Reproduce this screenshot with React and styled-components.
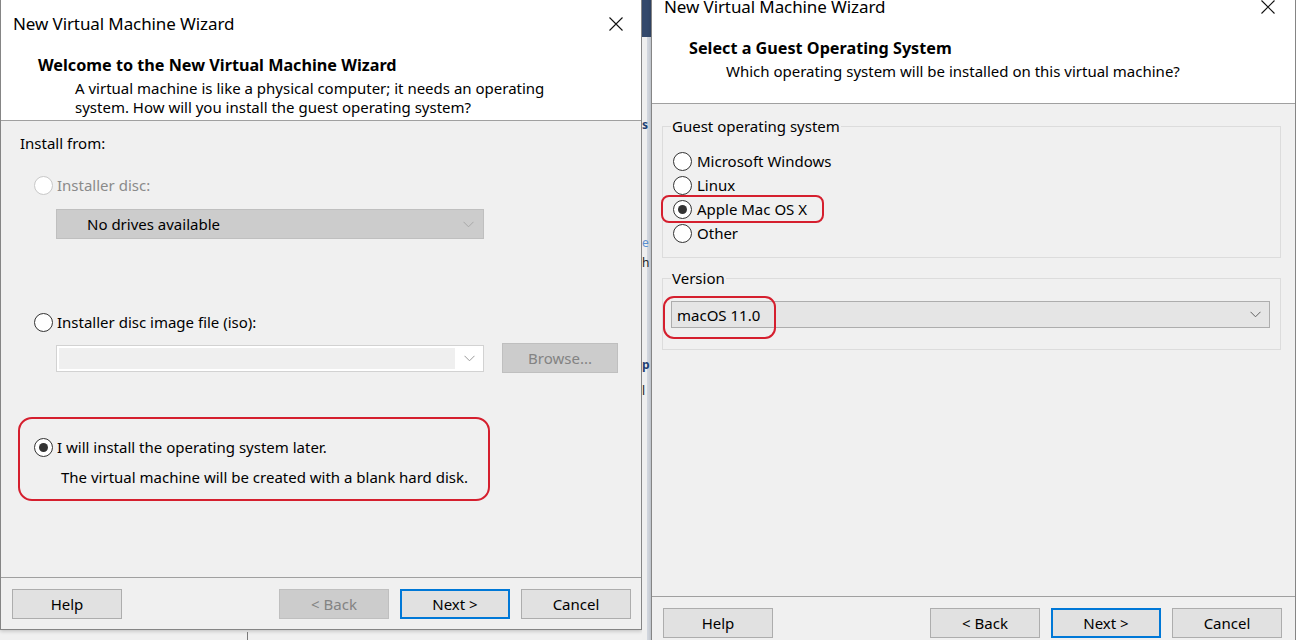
import React from 'react';
import styled, { createGlobalStyle } from 'styled-components';

const GlobalStyle = createGlobalStyle`
  html, body {
    margin: 0;
    padding: 0;
    background: #f0f0f0;
  }
`;

const Page = styled.div`
  width: 1296px;
  height: 640px;
  overflow: hidden;
  display: flex;
  align-items: flex-start;
  background: #f0f0f0;
  font-family: "Noto Sans", "Open Sans", sans-serif;
  font-size: 15px;
  color: #000;
`;

const LeftColumn = styled.div`
  display: flex;
  flex-direction: column;
  flex-shrink: 0;
`;

const Window = styled.div`
  box-sizing: border-box;
  width: ${(p) => p.$width}px;
  height: ${(p) => p.$height}px;
  margin-top: ${(p) => p.$offset || 0}px;
  flex-shrink: 0;
  display: flex;
  flex-direction: column;
  background: #f0f0f0;
  border: 1px solid #858585;
  border-top: none;
  box-shadow: 0 1px 4px rgba(0, 0, 0, 0.22);
`;

const WhiteTop = styled.div`
  background: #fff;
  height: 120px;
  border-bottom: 1px solid #a0a0a0;
  flex-shrink: 0;
`;

const TitleBar = styled.div`
  height: 47px;
  display: flex;
  align-items: center;
  justify-content: space-between;
  padding: 0 ${(p) => p.$closeGap}px 0 12px;
`;

const Title = styled.span`
  font-size: 17px;
  letter-spacing: -0.1px;
`;

const Heading = styled.div`
  margin: 8px 0 0 37px;
  font-size: 16.2px;
  font-weight: 700;
  line-height: 20px;
`;

const Description = styled.div`
  margin: 4px 0 0 74px;
  line-height: 19px;
`;

const Body = styled.div`
  flex: 1;
  display: flex;
  flex-direction: column;
  align-items: flex-start;
  padding: ${(p) => p.$pad};
`;

const Label = styled.div`
  line-height: 20px;
`;

const RadioRow = styled.div`
  position: relative;
  display: flex;
  align-items: center;
  gap: ${(p) => p.$gap || 4}px;
  height: ${(p) => p.$height || 20}px;
  margin: ${(p) => p.$margin || 0};
  color: ${(p) => (p.$disabled ? '#8a8a8a' : '#000')};
  white-space: nowrap;
`;

const RadioCircle = styled.span`
  box-sizing: border-box;
  width: 19px;
  height: 19px;
  border-radius: 50%;
  border: 1px solid ${(p) => (p.$disabled ? '#c8c8c8' : '#333')};
  background: #fff;
  display: inline-flex;
  align-items: center;
  justify-content: center;
  flex-shrink: 0;

  &::after {
    content: '';
    width: 9px;
    height: 9px;
    border-radius: 50%;
    background: #333;
    display: ${(p) => (p.$checked ? 'block' : 'none')};
  }
`;

const DisabledSelect = styled.div`
  box-sizing: border-box;
  margin: 14px 0 0 36px;
  width: 428px;
  height: 30px;
  background: #cccccc;
  border: 1px solid #bfbfbf;
  display: flex;
  align-items: center;
  justify-content: space-between;
  padding: 0 9px 0 30px;
`;

const ComboRow = styled.div`
  margin: 11px 0 0 36px;
  display: flex;
  align-items: center;
  gap: 18px;
`;

const Combo = styled.div`
  box-sizing: border-box;
  width: 428px;
  height: 27px;
  border: 1px solid #d2d2d2;
  background: #fff;
  padding: 2px 0 2px 2px;
  display: flex;
`;

const ComboField = styled.div`
  flex: 1;
  background: #efefef;
`;

const ComboArrow = styled.div`
  width: 28px;
  display: flex;
  align-items: center;
  justify-content: center;
`;

const Button = styled.button`
  box-sizing: border-box;
  width: ${(p) => p.$width || 110}px;
  height: 30px;
  padding: 0;
  margin: 0;
  font-family: inherit;
  font-size: 15px;
  color: ${(p) => (p.disabled ? '#838383' : '#000')};
  background: ${(p) => (p.disabled ? '#cccccc' : '#e1e1e1')};
  border: ${(p) =>
    p.$primary ? '2px solid #0078d7' : p.disabled ? '1px solid #bfbfbf' : '1px solid #adadad'};
  flex-shrink: 0;
`;

const HighlightBox = styled.div`
  box-sizing: border-box;
  margin: 44px 0 0 -2px;
  width: 472px;
  height: 84px;
  border: 2px solid #d51f2e;
  border-radius: 14px;
  padding: 18px 0 0 14px;
`;

const Note = styled.div`
  margin: 10px 0 0 27px;
  line-height: 20px;
  white-space: nowrap;
`;

const Marker = styled.span`
  position: absolute;
  box-sizing: border-box;
  left: ${(p) => p.$left}px;
  top: ${(p) => p.$top}px;
  width: ${(p) => p.$w}px;
  height: ${(p) => p.$h}px;
  border: 2px solid #d51f2e;
  border-radius: ${(p) => p.$r}px;
  pointer-events: none;
`;

const Group = styled.fieldset`
  margin: ${(p) => p.$top || 0}px 0 0;
  border: 1px solid #dcdcdc;
  padding: 0 10px ${(p) => p.$bottom}px 8px;
  min-width: 0;
  align-self: stretch;
`;

const Legend = styled.legend`
  padding: 0 1px;
  line-height: 20px;
`;

const OptionList = styled.div`
  margin-top: 13px;
  display: flex;
  flex-direction: column;
  align-items: flex-start;
`;

const VersionSelect = styled.div`
  position: relative;
  box-sizing: border-box;
  margin-top: 13px;
  height: 27px;
  background: #e5e5e5;
  border: 1px solid #adadad;
  display: flex;
  align-items: center;
  justify-content: space-between;
  padding: 0 8px 0 5px;
`;

const Footer = styled.div`
  flex-shrink: 0;
  border-top: 1px solid #a0a0a0;
  display: flex;
  gap: 11px;
  padding: 11px ${(p) => p.$right}px 10px 11px;
`;

const Spacer = styled.div`
  flex: 1;
`;

const Gap = styled.div`
  width: 9px;
  height: 640px;
  flex-shrink: 0;
  overflow: hidden;
  display: flex;
  flex-direction: column;
  background: linear-gradient(to right, #efefef 0, #efefef 5px, #d3d8e0 5px, #d3d8e0 9px);
`;

const GapTop = styled.div`
  height: 37px;
  background: #34496b;
  flex-shrink: 0;
`;

const Fragment = styled.span`
  display: block;
  margin: ${(p) => p.$top}px 0 0 0;
  height: 20px;
  line-height: 20px;
  font-size: 12px;
  font-weight: ${(p) => (p.$bold ? 700 : 400)};
  color: ${(p) => p.$color};
`;

const BelowBar = styled.div`
  height: 10px;
  display: flex;
  align-items: flex-end;
`;

const Tick = styled.div`
  margin-left: 247px;
  width: 1px;
  height: 8px;
  background: #7a7a7a;
`;

const CloseIcon = () => (
  <svg width="14" height="14" viewBox="0 0 14 14">
    <path d="M0.5 0.5 L13.5 13.5 M13.5 0.5 L0.5 13.5" stroke="#111" strokeWidth="1.1" fill="none" />
  </svg>
);

const Chevron = ({ color = '#606060' }) => (
  <svg width="11" height="7" viewBox="0 0 11 7">
    <path d="M0.5 0.8 L5.5 5.8 L10.5 0.8" stroke={color} strokeWidth="1" fill="none" />
  </svg>
);

const Radio = ({ checked, disabled, children, ...rest }) => (
  <RadioRow $disabled={disabled} {...rest}>
    <RadioCircle $checked={checked} $disabled={disabled} />
    <span>{children}</span>
  </RadioRow>
);

const WizardHeader = ({ closeGap, heading, lines }) => (
  <WhiteTop>
    <TitleBar $closeGap={closeGap}>
      <Title>New Virtual Machine Wizard</Title>
      <CloseIcon />
    </TitleBar>
    <Heading>{heading}</Heading>
    <Description>
      {lines.map((l) => (
        <div key={l}>{l}</div>
      ))}
    </Description>
  </WhiteTop>
);

const WizardFooter = ({ right, backDisabled }) => (
  <Footer $right={right}>
    <Button>Help</Button>
    <Spacer />
    <Button disabled={backDisabled}>&lt; Back</Button>
    <Button $primary>Next &gt;</Button>
    <Button>Cancel</Button>
  </Footer>
);

const osList = ['Microsoft Windows', 'Linux', 'Apple Mac OS X', 'Other'];

export default function App() {
  return (
    <Page>
      <GlobalStyle />
      <LeftColumn>
        <Window $width={642} $height={630}>
          <WizardHeader
            closeGap={18}
            heading="Welcome to the New Virtual Machine Wizard"
            lines={[
              'A virtual machine is like a physical computer; it needs an operating',
              'system. How will you install the guest operating system?',
            ]}
          />
          <Body $pad="12px 0 0 19px">
            <Label>Install from:</Label>
            <Radio disabled $margin="22px 0 0 14px">
              Installer disc:
            </Radio>
            <DisabledSelect>
              <span>No drives available</span>
              <Chevron color="#a8a8a8" />
            </DisabledSelect>
            <Radio $margin="73px 0 0 14px">Installer disc image file (iso):</Radio>
            <ComboRow>
              <Combo>
                <ComboField />
                <ComboArrow>
                  <Chevron color="#9a9a9a" />
                </ComboArrow>
              </Combo>
              <Button disabled $width={116}>
                Browse...
              </Button>
            </ComboRow>
            <HighlightBox>
              <Radio checked>I will install the operating system later.</Radio>
              <Note>The virtual machine will be created with a blank hard disk.</Note>
            </HighlightBox>
          </Body>
          <WizardFooter right={10} backDisabled />
        </Window>
        <BelowBar>
          <Tick />
        </BelowBar>
      </LeftColumn>

      <Gap>
        <GapTop />
        <Fragment $top={78} $bold $color="#1f3f73">s</Fragment>
        <Fragment $top={98} $color="#5b8fd0">e</Fragment>
        <Fragment $top={0} $color="#222">h</Fragment>
        <Fragment $top={82} $bold $color="#1f3f73">p</Fragment>
        <Fragment $top={6} $color="#222">l</Fragment>
      </Gap>

      <Window $width={645} $height={666} $offset={-17}>
        <WizardHeader
          closeGap={20}
          heading="Select a Guest Operating System"
          lines={['Which operating system will be installed on this virtual machine?']}
        />
        <Body $pad="12px 14px 0 10px">
          <Group $bottom={12}>
            <Legend>Guest operating system</Legend>
            <OptionList>
              {osList.map((os) => (
                <Radio key={os} checked={os === 'Apple Mac OS X'} $height={24} $gap={5} $margin="0 0 0 2px">
                  {os}
                  {os === 'Apple Mac OS X' && <Marker $left={-12} $top={-2} $w={163} $h={28} $r={8} />}
                </Radio>
              ))}
            </OptionList>
          </Group>
          <Group $top={10} $bottom={21}>
            <Legend>Version</Legend>
            <VersionSelect>
              <span>macOS 11.0</span>
              <Chevron />
              <Marker $left={-9} $top={-6} $w={113} $h={43} $r={11} />
            </VersionSelect>
          </Group>
        </Body>
        <WizardFooter right={13} />
      </Window>
    </Page>
  );
}
